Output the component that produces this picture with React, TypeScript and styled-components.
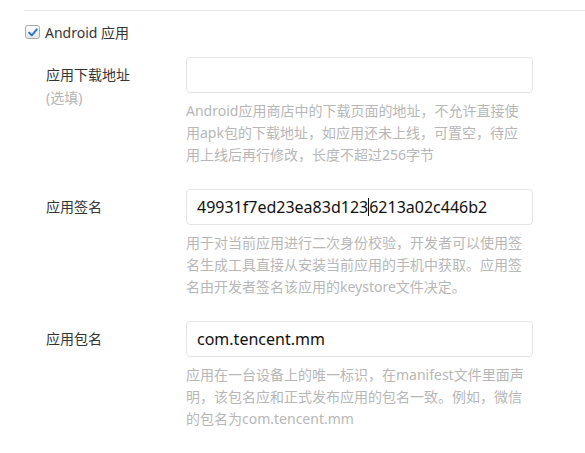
import React from 'react';
import styled, { createGlobalStyle } from 'styled-components';

const GlobalStyle = createGlobalStyle`
  body {
    margin: 0;
    background: #fff;
    font-family: "Noto Sans", "Noto Sans CJK SC", sans-serif;
    color: #353535;
  }
`;

const Page = styled.div`
  padding-left: 24px;
`;

const Divider = styled.div`
  margin-top: 10px;
  border-top: 1px solid #e5e5e5;
`;

const CheckRow = styled.label`
  display: flex;
  align-items: center;
  gap: 5px;
  margin-top: 14px;
  height: 14px;
  font-size: 14px;
  color: #353535;
`;

const CheckBox = styled.span`
  display: inline-flex;
  align-items: center;
  justify-content: center;
  box-sizing: border-box;
  width: 15px;
  height: 14px;
  margin-left: 1px;
  border: 1px solid #aaa;
  border-radius: 3px;
  background: linear-gradient(#ffffff, #e6e6e6);
`;

const Rows = styled.div`
  display: flex;
  flex-direction: column;
  gap: 23px;
  margin-top: 18px;
`;

const Row = styled.div`
  display: grid;
  grid-template-columns: 140px 347px;
  padding-left: 22px;
`;

const LabelCol = styled.div`
  padding-top: 8px;
  font-size: 14px;
`;

const LabelText = styled.div`
  line-height: 20px;
  color: #353535;
`;

const LabelSub = styled.div`
  margin-top: 3px;
  line-height: 20px;
  color: #b5b5b5;
`;

const Field = styled.div`
  box-sizing: border-box;
  display: flex;
  align-items: center;
  height: 36px;
  padding: 0 10px;
  border: 1px solid #e4e4e4;
  border-radius: 4px;
  font-size: 16px;
  color: #111;
`;

const Caret = styled.span`
  display: inline-block;
  width: 1px;
  height: 18px;
  background: #111;
  vertical-align: middle;
`;

const Help = styled.p`
  margin: 7px 0 0;
  width: 340px;
  font-size: 14px;
  line-height: 22px;
  color: #b7b7b7;
`;

const CheckIcon = () => (
  <svg width="10" height="9" viewBox="0 0 10 9">
    <path d="M1.2 4.8 L3.8 7.3 L8.8 1.4" fill="none" stroke="#2b78d0" strokeWidth="2" strokeLinecap="round" strokeLinejoin="round" />
  </svg>
);

type FormRowProps = {
  label: string;
  sub?: string;
  children?: React.ReactNode;
  help: string;
};

const FormRow = ({ label, sub, children, help }: FormRowProps) => (
  <Row>
    <LabelCol>
      <LabelText>{label}</LabelText>
      {sub && <LabelSub>{sub}</LabelSub>}
    </LabelCol>
    <div>
      <Field>{children}</Field>
      <Help>{help}</Help>
    </div>
  </Row>
);

const App = () => (
  <>
    <GlobalStyle />
    <Page>
      <Divider />
      <CheckRow>
        <CheckBox>
          <CheckIcon />
        </CheckBox>
        Android 应用
      </CheckRow>
      <Rows>
        <FormRow
          label="应用下载地址"
          sub="(选填)"
          help="Android应用商店中的下载页面的地址，不允许直接使用apk包的下载地址，如应用还未上线，可置空，待应用上线后再行修改，长度不超过256字节"
        />
        <FormRow
          label="应用签名"
          help="用于对当前应用进行二次身份校验，开发者可以使用签名生成工具直接从安装当前应用的手机中获取。应用签名由开发者签名该应用的keystore文件决定。"
        >
          49931f7ed23ea83d123<Caret />6213a02c446b2
        </FormRow>
        <FormRow
          label="应用包名"
          help="应用在一台设备上的唯一标识，在manifest文件里面声明，该包名应和正式发布应用的包名一致。例如，微信的包名为com.tencent.mm"
        >
          com.tencent.mm
        </FormRow>
      </Rows>
    </Page>
  </>
);

export default App;
